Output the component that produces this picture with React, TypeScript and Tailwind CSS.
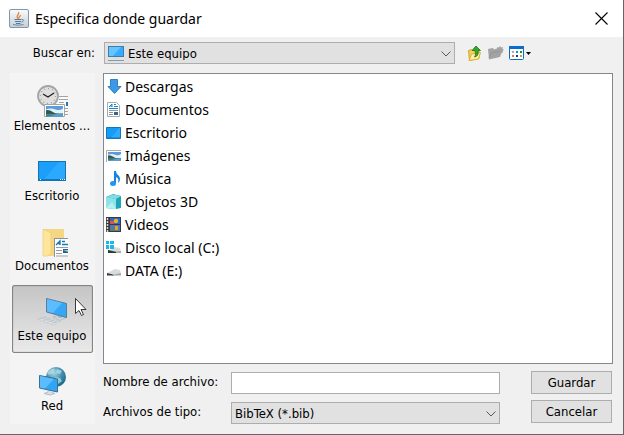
import type { ReactNode } from "react";

const LABEL_FONT = "font-['DejaVu_Sans_Condensed','DejaVu_Sans',sans-serif]";

function JavaIcon() {
  return (
    <svg width="20" height="19" viewBox="0 0 20 19" aria-hidden="true">
      <defs>
        <linearGradient id="javaBg" x1="0" y1="0" x2="0" y2="1">
          <stop offset="0" stopColor="#fbfbfb" />
          <stop offset="1" stopColor="#c3ced8" />
        </linearGradient>
      </defs>
      <rect x=".5" y=".5" width="19" height="18" rx="1.5" fill="url(#javaBg)" stroke="#8296a9" />
      <path d="M9 9.500C6 7 11 5.500 9.500 3M10 10c-1.500-2 2-2.500 1.500-4" fill="none" stroke="#e8853d" strokeWidth="1.300" />
      <path d="M5.500 10.500h7M6 12.500h6M13 10.500c2.500 0 2 2-.5 2.500M7 14.500h4.500" fill="none" stroke="#54799c" />
      <path d="M4 15.500q5 1.500 10.500 0" fill="none" stroke="#6c8cab" />
    </svg>
  );
}

function MonitorIcon() {
  return (
    <svg width="16" height="16" viewBox="0 0 16 16" aria-hidden="true">
      <rect x=".5" y=".5" width="15" height="10" fill="#36abff" stroke="#3c7ea6" />
      <path d="M1 1h12L5 10H1z" fill="#66c4ff" />
      <path d="M5 12h6" stroke="#d3dbe0" />
      <path d="M0 14.500h16" stroke="#7d9db1" />
    </svg>
  );
}

function FolderUpIcon() {
  return (
    <svg width="16" height="17" viewBox="0 0 16 17" aria-hidden="true">
      <path d="M1.500 5.500l3-1 1 1 6.500-1v9L2.500 15.500z" fill="#f3cf5b" stroke="#d5a42c" />
      <path d="M2 15.500L4.500 9l9-1.500-2 6.500z" fill="#ffeda0" stroke="#dcb03d" />
      <path d="M5 5.500L9 1l4.500 4.500H11c.5 4-.5 6-3.500 6.500C9 10 8.500 8 8 5.500z" fill="#35a62b" stroke="#1c7a1b" strokeWidth=".8" />
    </svg>
  );
}

function NewFolderIcon() {
  return (
    <svg width="16" height="14" viewBox="0 0 16 14" aria-hidden="true">
      <path d="M0 3l5-1 1 1.500 3-1 .5-1.500 1.500.5L12 0l1 1.500 2-.5-.5 2L16 4l-1.500 1 .5 1.500-1.500.5-1.500 4-11 2.500z" fill="#a3a3a3" />
      <path d="M1 12L3.500 6.500l8-1" fill="none" stroke="#959595" />
    </svg>
  );
}

function ViewMenuIcon() {
  return (
    <svg width="23" height="15" viewBox="0 0 23 15" aria-hidden="true">
      <rect x=".5" y=".5" width="14" height="13" rx="1" fill="#fff" stroke="#0a6cce" />
      <path d="M0 1.500h15" stroke="#0a6cce" strokeWidth="3" />
      <path d="M3 5h2v2H3z" fill="#a9a9c6" />
      <path d="M7 5h2v2H7z" fill="#2684e8" />
      <path d="M11 5h2v2h-2z" fill="#1c8b3c" />
      <path d="M3 9h2v2H3z" fill="#f17452" />
      <path d="M7 9h2v2H7z" fill="#173a91" />
      <path d="M11 9h2v2h-2z" fill="#c4a32a" />
      <path d="M17 6h5l-2.500 3z" fill="#000" />
    </svg>
  );
}

function Chevron() {
  return (
    <svg className="pointer-events-none absolute right-1 top-[9px]" width="10" height="6" viewBox="0 0 10 6" aria-hidden="true">
      <path d="M.5.5L5 5 9.500.5" fill="none" stroke="#5a5a5a" />
    </svg>
  );
}

function Landscape({ x, y, w, h }: { x: number; y: number; w: number; h: number }) {
  return (
    <svg x={x} y={y} width={w} height={h} viewBox="0 0 20 13" preserveAspectRatio="none">
      <rect width="20" height="13" fill="#5c9bdc" />
      <path d="M0 4q6-2 11 0t9-1v6H0z" fill="#e3f1fa" />
      <path d="M0 5q4-1 8 2t12 2v1H0z" fill="#2f5b50" />
      <path d="M0 9.500h20V13H0z" fill="#5f9fc4" />
      <path d="M0 10h12l-8 2H0z" fill="#3f7c79" />
    </svg>
  );
}

function RecentIcon() {
  return (
    <svg width="32" height="32" viewBox="0 0 32 32" aria-hidden="true">
      <path d="M22 11h10v21H22z" fill="#fafafa" />
      <path d="M23 11.500h9M23 14.500h9M23 17.500h5M23 20.500h5M29 23.500h3M29 26.500h3M29 29.500h3" stroke="#a3a3a3" />
      <path d="M30 17h2v4h-2z" fill="#2874b0" />
      <circle cx="12" cy="11" r="10" fill="#dfe0dd" stroke="#a4a6a6" strokeWidth="1.800" />
      <circle cx="12" cy="11" r="7.500" fill="none" stroke="#8a8d8e" strokeWidth="1.200" strokeDasharray=".8 3.127" />
      <path d="M7 9l5 3 6-4" fill="none" stroke="#202020" strokeWidth="1.300" />
      <path d="M8.500 19.500h20v12h-20z" fill="#fff" stroke="#a5a5a5" />
      <Landscape x={10} y={21} w={17} h={11} />
    </svg>
  );
}

function DesktopIcon() {
  return (
    <svg width="32" height="32" viewBox="0 0 32 32" aria-hidden="true">
      <rect x="2.500" y="6.500" width="27" height="19" fill="#1c9ffa" stroke="#1674ad" />
      <path d="M8 24L23 7h6v17z" fill="#2ba9ff" />
      <path d="M3 24.500h26" stroke="#0879c8" />
      <path d="M4 24.500h1M24 24.500h1M26 24.500h1M28 24.500h1" stroke="#fff" />
    </svg>
  );
}

function DocumentFolderIcon() {
  return (
    <svg width="32" height="32" viewBox="0 0 32 32" aria-hidden="true">
      <path d="M7 4h21v27H7z" fill="#f4d683" />
      <path d="M7 4l8 4v20l-3 3H7z" fill="#ffe59b" stroke="#ecca74" strokeWidth=".7" />
      <path d="M18.500 13.500H32M18.500 13v19" fill="none" stroke="#8d9499" />
      <path d="M19 14h13v18H19z" fill="#fff" />
      <path d="M20 20l4-4v4m-3-1.500h3M26 16.500h3M26 19.500h6" fill="none" stroke="#1679b8" strokeWidth="1.400" />
      <path d="M20 22.500h12M20 25.500h6M20 28.500h6M20 31h12" stroke="#969ca1" />
      <path d="M27 24h5v4h-5z" fill="#315c80" />
      <path d="M27 25l5 2v-2z" fill="#8ed0f1" />
    </svg>
  );
}

function ComputerIcon() {
  return (
    <svg width="32" height="32" viewBox="0 0 32 32" aria-hidden="true">
      <path d="M17 22l6-1.500 7 2-6 3z" fill="#d0dae1" stroke="#9db0bd" strokeWidth=".7" />
      <path d="M22 19h4v4h-4z" fill="#a9bac5" />
      <path d="M10.500 3.500l20 5v14l-20-5.500z" fill="#34a7f5" stroke="#5a7d94" />
      <path d="M11 4l15 4-9 10-6-1.500z" fill="#5bbcff" />
      <path d="M1 24l7-2.500 17 5-8 3.500z" fill="#dfe3e6" stroke="#c3c9cd" strokeWidth=".7" />
      <path d="M4 23l16 5M7 22.500l15 4.500M3 24.500l7-2.500M7 26l7-2.500M11 27.500l7-2.500M15 28.500l7-2.500" stroke="#b4bcc2" strokeWidth=".6" />
    </svg>
  );
}

function NetworkIcon() {
  return (
    <svg width="32" height="32" viewBox="0 0 32 32" aria-hidden="true">
      <defs>
        <radialGradient id="globe" cx=".4" cy=".3" r=".8">
          <stop offset="0" stopColor="#a8d9e6" />
          <stop offset=".5" stopColor="#408fae" />
          <stop offset="1" stopColor="#155d7e" />
        </radialGradient>
      </defs>
      <circle cx="20" cy="12" r="10" fill="url(#globe)" />
      <path d="M11 8q4-5 8-4l-2 4-4 2zM21 4l5 2-2 3-4-1zM19 12l5 1 2 3-4 3z" fill="#b4dce4" opacity=".75" />
      <path d="M3.500 10.500L21.500 14v13L3.500 23z" fill="#31a4f3" stroke="#3d6e8c" />
      <path d="M4 11l14 3-9 9.500-5-1z" fill="#5bbcff" />
      <path d="M12 26v1l-4 1.500 6 1.500 5-1.500-3-1v-1" fill="#d4dfe6" stroke="#a6b6c0" strokeWidth=".8" />
    </svg>
  );
}

function Small({ children }: { children: ReactNode }) {
  return (
    <svg className="shrink-0" width="16" height="16" viewBox="0 0 16 16" aria-hidden="true">
      {children}
    </svg>
  );
}

const entries: { name: string; icon: ReactNode }[] = [
  { name: "Descargas", icon: <path d="M4.500.5h7v7H15l-6.500 7-6.500-7h2.500z" fill="#3d98e8" stroke="#2f80c4" /> },
  {
    name: "Documentos",
    icon: (
      <>
        <path d="M1.500.5h9l3 3v11h-12z" fill="#fff" stroke="#a5abb0" />
        <path d="M3 5l3-3v3M4 4h2M8 2.500h2M8 4.500h4M3 6.500h9" fill="none" stroke="#1683cf" />
        <path d="M3 8.500h9M3 10.500h4M3 12.500h4" stroke="#8d9499" />
        <path d="M8 10h4v3H8z" fill="#3a657f" />
      </>
    ),
  },
  {
    name: "Escritorio",
    icon: (
      <>
        <path d="M.5 2.500h14v11H.5z" fill="#159cf7" stroke="#1476b5" />
        <path d="M5 13l8-10h1v10z" fill="#30aaff" />
        <path d="M1 13h13" stroke="#0879c8" />
      </>
    ),
  },
  {
    name: "Imágenes",
    icon: (
      <>
        <path d="M.5 14V2.500H15" fill="none" stroke="#aaa" />
        <Landscape x={2} y={4} w={13} h={9} />
      </>
    ),
  },
  {
    name: "Música",
    icon: (
      <>
        <path d="M8 0h2c0 4 4 4 4 8 0 2-1 3-2 4 1-4 0-5-2-6v6H8z" fill="#1683e5" />
        <ellipse cx="7" cy="12.500" rx="3" ry="2.500" fill="#2196f3" />
      </>
    ),
  },
  {
    name: "Objetos 3D",
    icon: (
      <>
        <path d="M0 3l7-3 8 2v12l-5 1-10-1z" fill="#1fa5b8" />
        <path d="M0 3l7-2.500L15 2l-5 3z" fill="#7fdde3" />
        <path d="M0 3l10 2v10L0 14z" fill="#8fe3e8" />
        <path d="M0 14l6-6 4 7z" fill="#b5f0f2" />
      </>
    ),
  },
  {
    name: "Videos",
    icon: (
      <>
        <path d="M0 0h15v15H0z" fill="#3a3a3a" />
        <path d="M1.500 1v14" stroke="#d6d6d6" strokeWidth="1.500" strokeDasharray="2 1" />
        <path d="M4 1h10v6H4z" fill="#276acb" />
        <path d="M4 8h10v6H4z" fill="#5275bc" />
        <path d="M4 4h4v3H4z" fill="#e5513e" />
        <circle cx="10" cy="4" r="2.200" fill="#e7b41e" />
        <path d="M9 9h3v4H9z" fill="#dda621" />
        <path d="M4 12l5 1v1H4z" fill="#46913c" />
      </>
    ),
  },
  {
    name: "Disco local (C:)",
    icon: (
      <>
        <path d="M3 12l5-5 6 1 1 4-4 1z" fill="#d9dadb" />
        <path d="M2 10l9 1.500 4-.5v2H2z" fill="#a6a8a9" />
        <path d="M2 10l8 2v1H2z" fill="#333637" />
        <path d="M0 1h3v3H0zM4 1h4v3H4zM0 5h3v4H0zM4 5h4v4H4z" fill="#16b9ed" />
      </>
    ),
  },
  {
    name: "DATA (E:)",
    icon: (
      <>
        <path d="M1 10l8-4 5 1 1 4-4 1.500z" fill="#dadbdc" />
        <path d="M8 11.500l7-1.500v2.500H6z" fill="#a6a8a9" />
        <path d="M1 10l6 1.500 1 1H1z" fill="#35393b" />
      </>
    ),
  },
];

const places: { name: string; icon: ReactNode; selected?: boolean }[] = [
  { name: "Elementos ...", icon: <RecentIcon /> },
  { name: "Escritorio", icon: <DesktopIcon /> },
  { name: "Documentos", icon: <DocumentFolderIcon /> },
  { name: "Este equipo", icon: <ComputerIcon />, selected: true },
  { name: "Red", icon: <NetworkIcon /> },
];

function Pointer() {
  return (
    <svg className="pointer-events-none absolute left-[62px] top-3" width="13" height="19" viewBox="0 0 13 19" aria-hidden="true">
      <path d="M.5.500v15l3.500-3 2.500 5 2-1-2.500-5H11z" fill="#fff" stroke="#222" strokeWidth=".9" />
    </svg>
  );
}

export default function App() {
  const button = "h-[23px] w-full border border-[#adadad] bg-[#e1e1e1] leading-none";
  const select = "w-full appearance-none border border-[#adadad] bg-[#e1e1e1] h-[22px] pr-5 leading-none";
  return (
    <div className={`flex min-h-screen flex-col border-b border-r border-[#666] bg-[#f0f0f0] text-[13px] text-black ${LABEL_FONT}`}>
      <header className="flex h-[37px] items-center bg-white pl-[9px] pr-[14px]">
        <JavaIcon />
        <h1 className="ml-[6px] flex-1 font-['Noto_Sans',sans-serif] text-[14px]">Especifica donde guardar</h1>
        <button aria-label="Cerrar" className="p-px">
          <svg width="13" height="13" viewBox="0 0 13 13" aria-hidden="true">
            <path d="M.5.500l12 12M12.500.500l-12 12" stroke="#000" strokeWidth="1.100" />
          </svg>
        </button>
      </header>
      <div className="flex items-center pb-[9px] pl-[10px] pt-[5px]">
        <label htmlFor="folder" className="w-[85px] text-right leading-4">Buscar en:</label>
        <div className="relative ml-[9px] mr-[168px] flex-1">
          <select id="folder" className={`${select} pl-[23px]`}>
            <option>Este equipo</option>
          </select>
          <span className="pointer-events-none absolute left-1 top-1"><MonitorIcon /></span>
          <Chevron />
        </div>
        <div className="-ml-[156px] flex w-[156px] items-center gap-[5px]">
          <button aria-label="Subir un nivel"><FolderUpIcon /></button>
          <button aria-label="Crear carpeta" disabled><NewFolderIcon /></button>
          <button aria-label="Menú Ver"><ViewMenuIcon /></button>
        </div>
      </div>
      <main className="flex flex-1 gap-2 px-[10px] pb-[10px]">
        <nav className="flex w-[85px] shrink-0 flex-col gap-[2px] bg-[#f4f4f4] px-[2px] pb-px pt-[2px]">
          {places.map((place) => (
            <button
              key={place.name}
              className={`relative flex h-[68px] flex-col items-center border pr-px pt-[9px] leading-[18px] ${
                place.selected
                  ? "rounded-xs border-[#858585] bg-linear-to-b from-[#c5c5c5] to-[#eaeaea] shadow-[inset_0_0_1px_#777]"
                  : "border-transparent"
              }`}
            >
              {place.icon}
              <span className="whitespace-nowrap">{place.name}</span>
              {place.selected && <Pointer />}
            </button>
          ))}
        </nav>
        <div className="flex min-w-0 flex-1 flex-col">
          <ul className="min-h-[291px] flex-1 border border-[#828790] bg-white pl-[2px] pt-px font-['Noto_Sans',sans-serif] text-[14px]">
            {entries.map((entry) => (
              <li key={entry.name}>
                <button className="flex h-[23px] items-center gap-[3px]">
                  <Small>{entry.icon}</Small>
                  {entry.name}
                </button>
              </li>
            ))}
          </ul>
          <form className="mt-[7px] flex justify-between pr-px" onSubmit={(event) => event.preventDefault()}>
            <div className="grid flex-1 grid-cols-[128px_1fr] gap-y-2 pt-px leading-5">
              <label htmlFor="filename">Nombre de archivo:</label>
              <input id="filename" className="h-[22px] w-full border border-[#abadb3] bg-white px-1" />
              <label htmlFor="filetype">Archivos de tipo:</label>
              <div className="relative">
                <select id="filetype" className={`${select} pl-[3px]`}>
                  <option>BibTeX (*.bib)</option>
                </select>
                <Chevron />
              </div>
            </div>
            <div className="ml-[31px] flex w-[81px] flex-col gap-[6px]">
              <button className={button}>Guardar</button>
              <button type="button" className={button}>Cancelar</button>
            </div>
          </form>
        </div>
      </main>
    </div>
  );
}
